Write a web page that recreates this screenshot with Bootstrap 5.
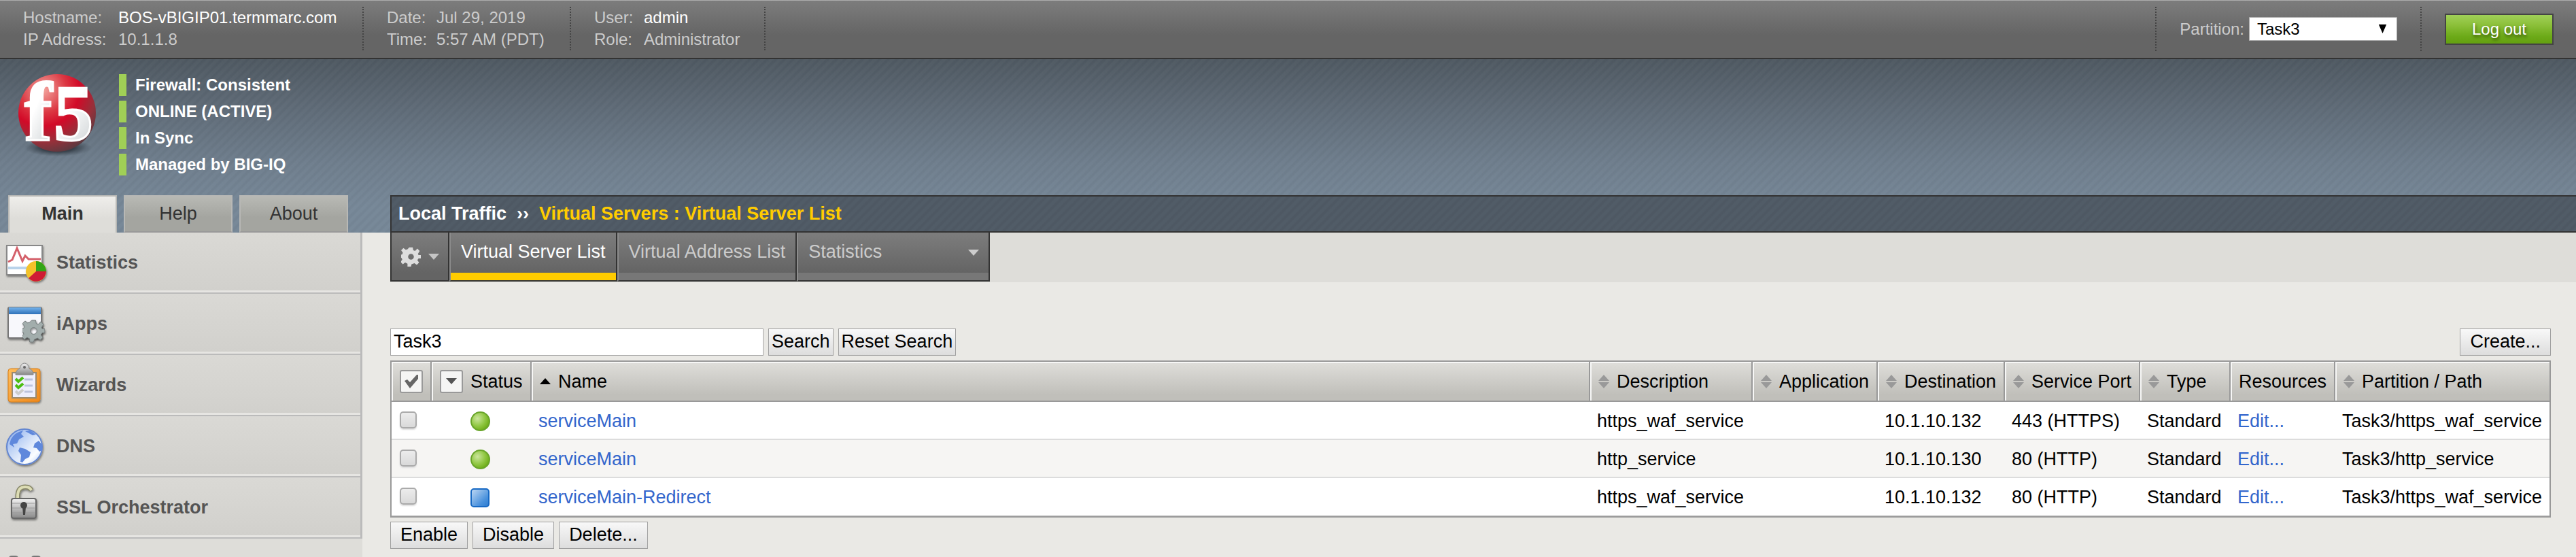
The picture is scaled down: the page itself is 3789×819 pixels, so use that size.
<!DOCTYPE html>
<html lang="en">
<head>
<meta charset="utf-8">
<meta name="viewport" content="width=device-width, initial-scale=1">
<title>Virtual Server List</title>
<link href="https://cdn.jsdelivr.net/npm/bootstrap@5.3.0/dist/css/bootstrap.min.css" rel="stylesheet">
<style>
body{font-family:"Liberation Sans",Arial,sans-serif;font-size:27px;line-height:32px;color:#000;background:#eae9e5}
a{text-decoration:none}
svg{display:block;flex:none}
.topbar{height:87px;font-size:24px;color:#ccc;background:linear-gradient(#7d7d7d,#656565 60%,#656565);border-bottom:2px solid #333;box-shadow:inset 0 1px #adadad;flex:none}
.info{margin:10px 0;padding:0 0 0 34px;display:grid;border-right:2px dotted #444;height:64px;min-width:286px;grid-template-columns:73px auto;white-space:nowrap}
.info.wide{min-width:535px;grid-template-columns:140px auto}
.info.mid{min-width:305px}
.info dt,.info dd{font-weight:400;margin:0}
.hot{color:#fff}
.part{margin:10px 0;padding:0 34px;border:dotted #444;border-width:0 2px;height:65px;gap:7px}
.part select{appearance:none;width:218px;height:35px;border:1px solid #a9a9a9;border-radius:0;padding:0 11px;line-height:32px;color:#000;background:#fff url("data:image/svg+xml,%3Csvg xmlns='http://www.w3.org/2000/svg' viewBox='0 0 14 16'%3E%3Cpath d='M0 0h14L7 16z'/%3E%3C/svg%3E") no-repeat right 14px top 10px/13px 13px}
.logout{width:160px;height:46px;margin:0 33px 0 34px;border:2px solid #444;color:#fff;background:linear-gradient(#a0d058,#8cc03a 35%,#6caa18 75%,#64a010);text-shadow:1px 3px 4px rgba(40,60,0,.8);padding:0}
.shell{background:repeating-linear-gradient(135deg,rgba(255,255,255,.015) 0 3px,rgba(0,0,0,.02) 5px 7px,rgba(255,255,255,.015) 9px) 0 0/100% 255px no-repeat,linear-gradient(#4f5962,#5f6b77 28%,#6f7e8d 60%,#768797 85%,#768797) 0 0/100% 255px no-repeat,#eae9e5}
.side{width:533px}
.device{height:200px;padding:22px 0 0 27px;gap:30px}
.emblem,.menu svg{overflow:visible}
.states{gap:7px;font-size:24px;font-weight:700;color:#fff}
.states li{border-left:11px solid #a0cf56;padding-left:13px;height:32px}
.tabs{gap:10px;padding-left:12px;font-size:27px}
.tabs a{width:160px;height:55px;border:2px solid #b8b8b5;border-bottom-color:#999;padding-bottom:2px;display:flex;align-items:center;justify-content:center;color:#333;background:linear-gradient(#b8b9b4,#a4a5a0 60%)}
.tabs a.active{font-weight:700;background:linear-gradient(#efeeeb,#deddd9 60%);border-bottom:0;padding-bottom:4px}
.menu{background:#deddd9}
.menu a{height:90px;display:flex;align-items:center;padding-left:6px;gap:17px;font-weight:700;color:#555;background:linear-gradient(#dad9d5,#d1d0cc);border-right:3px solid #bbb;border-bottom:2px solid #bbb;box-shadow:inset 0 -3px #e6e5e2}
.menu a.last{background:none;border:0;box-shadow:none;align-items:flex-start;padding-top:24px}
.main{padding-top:200px;margin-left:41px}
.crumb{height:55px;border:2px solid #333;border-right:0;padding:0 0 2px 10px;font-weight:700;color:#fff;gap:15px;background:repeating-linear-gradient(135deg,#515c67 0 3px,#4e5863 5px 7px,#515c67 9px)}
.crumb .here{color:#fc0}
.strip{height:73px;background:#deddd9}
.strip a{color:#ccc;height:72px;padding:0 15px;border-right:2px solid #333;border-bottom:2px solid #333;border-left:2px solid #8c8c8c;background:linear-gradient(#777,#777) 0 100%/100% 11px no-repeat,linear-gradient(#7d7d7d,#646464 59px)}
.strip a span{display:block;height:58px;line-height:57px}
.strip a:first-child{border-left-color:#333;padding:0 5px 0 14px;width:87px;display:flex;align-items:center;gap:11px;background:linear-gradient(#7d7d7d,#646464 59px)}
.strip a.active{color:#fff;background:linear-gradient(#fc0,#fc0) 0 100%/100% 11px no-repeat,linear-gradient(#7d7d7d,#646464 59px)}
.strip a.stats{width:284px;padding-right:14px;display:flex;justify-content:space-between;align-items:flex-start}
.strip a.stats svg{margin-top:25px}
.work{padding:68px 37px 0 0}
.bar-row{gap:7px}
.tool{height:40px;border:1px solid #a0a0a0;border-radius:0;color:#000;background:linear-gradient(#f8f8f8,#ddd);padding:0 14px 2px;line-height:36px}
.tool.tight{padding:0 4px 2px}
.find{width:549px;height:40px;border:1px solid #a5a5a5;padding:0 4px 2px;color:#000}
.vs{width:100%;margin:7px 0 6px;table-layout:fixed;border:2px solid #999;border-collapse:separate;border-spacing:0;background:#fff;white-space:nowrap}
.vs th{height:59px;font-weight:400;padding:0 0 0 12px;border-right:2px solid #999;border-bottom:2px solid #999;background:linear-gradient(#dfdeda,#c0bfba 85%);box-shadow:inset 2px 2px #f7f7f6}
.vs th:last-child{border-right:0}
.vs th>div{display:flex;align-items:center;gap:11px}
.vs td{height:56px;padding:2px 0 0 10px;border-bottom:2px solid #dcdcdc}
.vs td.state{padding-left:57px}
.vs tr:nth-child(even) td{background:#f6f5f3}
.vs td a{color:#36c}
.c-pick{width:59px}.c-stat{width:147px}.c-desc{width:239px}.c-app{width:184px}.c-dest{width:187px}.c-port{width:199px}.c-type{width:133px}.c-res{width:154px}.c-path{width:315px}
.mini{width:34px;height:34px;border:2px solid #999;border-radius:3px;background:#f5f5f4;padding:0;display:flex;align-items:center;justify-content:center}
.pick{appearance:none;display:block;width:25px;height:25px;margin:0 0 4px 2px;border:2px solid #aaa;border-radius:5px;background:linear-gradient(#ececec,#d9d9d9);box-shadow:0 2px 2px #ddd}
</style>
</head>
<body class="vh-100 overflow-hidden d-flex flex-column">
<svg width="0" height="0" class="position-absolute" aria-hidden="true"><defs>
<radialGradient id="ball" cx=".32" cy=".2" r=".85"><stop offset="0" stop-color="#f3a69f"/><stop offset=".35" stop-color="#dc3843"/><stop offset=".55" stop-color="#d20a28"/><stop offset=".8" stop-color="#96303a"/><stop offset="1" stop-color="#5a3a40"/></radialGradient>
<radialGradient id="shade"><stop offset="0" stop-color="#1c232a"/><stop offset=".5" stop-color="#2c353e" stop-opacity=".8"/><stop offset="1" stop-color="#3c4650" stop-opacity="0"/></radialGradient>
<linearGradient id="ink" x2=".6" y2="1"><stop offset=".5" stop-color="#fff"/><stop offset="1" stop-color="#d4d8da"/></linearGradient>
<radialGradient id="ok" cx=".35" cy=".35" r=".65"><stop offset="0" stop-color="#cbe59d"/><stop offset=".6" stop-color="#93c947"/><stop offset="1" stop-color="#72b01d"/></radialGradient>
<linearGradient id="blue" x2="1" y2="1"><stop offset="0" stop-color="#c3daf4"/><stop offset=".7" stop-color="#4790dc"/><stop offset="1" stop-color="#2c7bd0"/></linearGradient>
<linearGradient id="bar" x2="0" y2="1"><stop offset="0" stop-color="#75b4ec"/><stop offset="1" stop-color="#2f70b8"/></linearGradient>
<linearGradient id="metal" x2="0" y2="1"><stop offset="0" stop-color="#f2f2f2"/><stop offset="1" stop-color="#888"/></linearGradient>
<linearGradient id="wood" x2="1" y2="1"><stop offset="0" stop-color="#ffbe5c"/><stop offset="1" stop-color="#ee861a"/></linearGradient>
<linearGradient id="sea" x2="1" y2="1"><stop offset="0" stop-color="#86a9ea"/><stop offset=".4" stop-color="#c6d8f7"/><stop offset=".75" stop-color="#fbfdff"/><stop offset="1" stop-color="#b2c8f2"/></linearGradient>
<filter id="drop" x="-20%" y="-20%" width="150%" height="150%"><feDropShadow dx="1" dy="2" stdDeviation="1.5" flood-opacity=".45"/></filter>
<symbol id="sort" viewBox="0 0 16 20"><path d="M8 0l8 9H0zM8 20l8-9H0z" fill="#999"/></symbol>
<symbol id="down" viewBox="0 0 16 9"><path d="M0 0h16L8 9z"/></symbol>
<symbol id="cog" viewBox="-17 -17 34 34"><path fill-rule="evenodd" d="M-3-16h6l1 5 3 1 4-4 4 4-3 5 1 2h4v6h-4l-2 3 3 4-4 4-4-3-5 2-1 4h-6l0-5-4-2-4 3-4-4 3-4-1-3h-4v-5l5-1 1-3-3-4 4-4 4 3 3-1zM0-5a5 5 0 1 0 0 10a5 5 0 1 0 0-10z"/></symbol>
</defs></svg>

<header class="topbar d-flex">
  <dl class="info wide"><dt>Hostname:</dt><dd class="hot">BOS-vBIGIP01.termmarc.com</dd><dt>IP Address:</dt><dd>10.1.1.8</dd></dl>
  <dl class="info mid"><dt>Date:</dt><dd>Jul 29, 2019</dd><dt>Time:</dt><dd>5:57 AM (PDT)</dd></dl>
  <dl class="info"><dt>User:</dt><dd class="hot">admin</dd><dt>Role:</dt><dd>Administrator</dd></dl>
  <div class="part d-flex align-items-center ms-auto"><label for="partition">Partition:</label><select id="partition"><option>Task3</option></select></div>
  <div class="d-flex align-items-center"><button type="button" class="logout">Log out</button></div>
</header>

<div class="shell d-flex flex-fill overflow-hidden">
  <aside class="side flex-shrink-0">
    <div class="device d-flex">
      <svg width="118" height="122" viewBox="0 0 118 122" role="img" aria-label="f5" class="emblem">
        <ellipse cx="58" cy="108" rx="50" ry="13" fill="url(#shade)"/>
        <circle cx="57" cy="57" r="57" fill="url(#ball)"/>
        <g font-family="Liberation Serif" font-weight="700" fill="url(#ink)" stroke="#fff" stroke-width="3"><text x="9" y="97" font-size="122">f</text><text x="52" y="97" font-size="116">5</text></g>
      </svg>
      <ul class="states list-unstyled d-flex flex-column mb-0"><li>Firewall: Consistent</li><li>ONLINE (ACTIVE)</li><li>In Sync</li><li>Managed by BIG-IQ</li></ul>
    </div>
    <nav class="tabs d-flex"><a class="active" href="#">Main</a><a href="#">Help</a><a href="#">About</a></nav>
    <nav class="menu">
      <a href="#"><svg width="60" height="64" viewBox="0 0 60 64"><g filter="url(#drop)"><path d="M4 7h52v43H4z" fill="#fff" stroke="#888" stroke-width="2"/><path d="M6 38h36v4H6z" fill="#b9d3ea"/><path d="M6 31l6-3 7-17 8 19 4-8 5 5h18" fill="none" stroke="#d4606a" stroke-width="3"/></g><g filter="url(#drop)"><circle cx="47" cy="45" r="15" fill="#f3c22c"/><path d="M47 45V30a15 15 0 0 1 15 15z" fill="#32a514"/><path d="M47 45h15a15 15 0 0 1-26 10z" fill="#cf1f35"/></g></svg>Statistics</a>
      <a href="#"><svg width="60" height="64" viewBox="0 0 60 64"><g filter="url(#drop)"><rect x="6" y="8" width="49" height="45" rx="2" fill="#f8f8fc" stroke="#777" stroke-width="2"/><path d="M7 8h47v10H7z" fill="url(#bar)"/></g><g filter="url(#drop)"><use href="#cog" x="27" y="25" width="33" height="35" fill="#a2adac" stroke="#6f7777"/></g></svg>iApps</a>
      <a href="#"><svg width="60" height="64" viewBox="0 0 60 64"><g filter="url(#drop)"><rect x="6" y="8" width="47" height="49" rx="4" fill="url(#wood)" stroke="#d67e1c"/><path d="M12 14h35v37H12z" fill="#eeeefc" stroke="#9a8a70" stroke-width="2"/><path d="M17 17q0-7 6-9 2-8 7-8t7 8q6 2 6 9z" fill="url(#metal)" stroke="#888"/></g><circle cx="30" cy="6" r="2" fill="#666"/><g fill="none" stroke-width="4"><path d="M17 23l4 4 7-6M17 32l4 4 7-6" stroke="#4bbd12"/><path d="M17 41l4 4 7-6" stroke="#ccc"/><path d="M30 24h12M30 33h12M30 42h12" stroke="#bcc3de" stroke-width="3"/></g></svg>Wizards</a>
      <a href="#"><svg width="60" height="64" viewBox="0 0 60 64"><g filter="url(#drop)"><circle cx="30" cy="33" r="26" fill="url(#sea)" stroke="#6386d0" stroke-width="2"/></g><g fill="#5f88dc"><path d="M10 22q5-10 18-13l-3 5 4 4-7 4-3 6-6 1 2 5-7-5z"/><path d="M23 34l8 2 8 5-2 7-6 3-4 5-3-1 1-10-4-6z"/><path d="M45 28l6-4 5 6v8l-4 2-4-5-5-1zM31 10l8-1 8 6-5 1z"/></g></svg>DNS</a>
      <a href="#"><svg width="60" height="64" viewBox="0 0 60 64"><g filter="url(#drop)"><path d="M20 24V14q1-13 12-12 6 0 8 5" fill="none" stroke="#858566" stroke-width="7"/><path d="M20 24V14q1-13 12-12 6 0 8 5" fill="none" stroke="#dcdcb4" stroke-width="4"/><rect x="11" y="19" width="36" height="29" rx="3" fill="url(#metal)" stroke="#666" stroke-width="2"/><path d="M12 26h33M12 33h33M12 40h33" stroke="#999"/></g><circle cx="29" cy="29" r="5" fill="#444"/><path d="M27 31h5l-1 12h-3z" fill="#444"/></svg>SSL Orchestrator</a>
      <a href="#" class="last" aria-label="More"><svg width="60" height="44" viewBox="0 0 60 44"><rect x="7" y="1" width="14" height="30" rx="4" fill="#777"/><rect x="40" y="1" width="14" height="30" rx="4" fill="#777"/></svg></a>
    </nav>
  </aside>

  <main class="main flex-fill">
    <div class="crumb d-flex align-items-center"><span>Local Traffic</span><span>››</span><span class="here">Virtual Servers : Virtual Server List</span></div>
    <nav class="strip d-flex">
      <a href="#" aria-label="Options"><svg width="29" height="29" fill="#ddd"><use href="#cog"/></svg><svg width="16" height="9" fill="#c4c4c4"><use href="#down"/></svg></a>
      <a href="#" class="active"><span>Virtual Server List</span></a>
      <a href="#"><span>Virtual Address List</span></a>
      <a href="#" class="stats"><span>Statistics</span><svg width="16" height="9" fill="#ccc"><use href="#down"/></svg></a>
    </nav>
    <div class="work">
      <form class="bar-row d-flex">
        <input class="find" type="text" value="Task3" aria-label="Search"><button type="button" class="tool tight">Search</button><button type="button" class="tool tight">Reset Search</button><button type="button" class="tool ms-auto">Create...</button>
      </form>
      <table class="vs">
        <colgroup><col class="c-pick"><col class="c-stat"><col><col class="c-desc"><col class="c-app"><col class="c-dest"><col class="c-port"><col class="c-type"><col class="c-res"><col class="c-path"></colgroup>
        <thead><tr>
          <th><button type="button" class="mini" aria-label="Select all"><svg width="22" height="20" viewBox="0 0 22 20"><path d="M1 9l4-2 4 4L19 0h2v6L9 20z" fill="#666"/></svg></button></th>
          <th><div><button type="button" class="mini" aria-label="Filter status"><svg width="16" height="9" fill="#555"><use href="#down"/></svg></button>Status</div></th>
          <th><div><svg width="16" height="9" viewBox="0 0 16 9"><path d="M8 0l8 9H0z"/></svg>Name</div></th>
          <th><div><svg width="16" height="20"><use href="#sort"/></svg>Description</div></th>
          <th><div><svg width="16" height="20"><use href="#sort"/></svg>Application</div></th>
          <th><div><svg width="16" height="20"><use href="#sort"/></svg>Destination</div></th>
          <th><div><svg width="16" height="20"><use href="#sort"/></svg>Service Port</div></th>
          <th><div><svg width="16" height="20"><use href="#sort"/></svg>Type</div></th>
          <th>Resources</th>
          <th><div><svg width="16" height="20"><use href="#sort"/></svg>Partition / Path</div></th>
        </tr></thead>
        <tbody>
          <tr><td><input class="pick" type="checkbox" aria-label="Select serviceMain HTTPS"></td><td class="state"><svg width="29" height="29" viewBox="0 0 29 29"><circle cx="14.500" cy="14.500" r="13.500" fill="url(#ok)" stroke="#69a52a" stroke-width="2"/></svg></td><td><a href="#">serviceMain</a></td><td>https_waf_service</td><td></td><td>10.1.10.132</td><td>443 (HTTPS)</td><td>Standard</td><td><a href="#">Edit...</a></td><td>Task3/https_waf_service</td></tr>
          <tr><td><input class="pick" type="checkbox" aria-label="Select serviceMain HTTP"></td><td class="state"><svg width="29" height="29" viewBox="0 0 29 29"><circle cx="14.500" cy="14.500" r="13.500" fill="url(#ok)" stroke="#69a52a" stroke-width="2"/></svg></td><td><a href="#">serviceMain</a></td><td>http_service</td><td></td><td>10.1.10.130</td><td>80 (HTTP)</td><td>Standard</td><td><a href="#">Edit...</a></td><td>Task3/http_service</td></tr>
          <tr><td><input class="pick" type="checkbox" aria-label="Select serviceMain-Redirect"></td><td class="state"><svg width="29" height="29" viewBox="0 0 29 29"><rect x="1" y="2" width="26" height="26" rx="4" fill="url(#blue)" stroke="#1769c4" stroke-width="2"/></svg></td><td><a href="#">serviceMain-Redirect</a></td><td>https_waf_service</td><td></td><td>10.1.10.132</td><td>80 (HTTP)</td><td>Standard</td><td><a href="#">Edit...</a></td><td>Task3/https_waf_service</td></tr>
        </tbody>
      </table>
      <div class="bar-row d-flex"><button type="button" class="tool">Enable</button><button type="button" class="tool">Disable</button><button type="button" class="tool">Delete...</button></div>
    </div>
  </main>
</div>
<script src="https://cdn.jsdelivr.net/npm/bootstrap@5.3.0/dist/js/bootstrap.bundle.min.js"></script>
</body>
</html>
